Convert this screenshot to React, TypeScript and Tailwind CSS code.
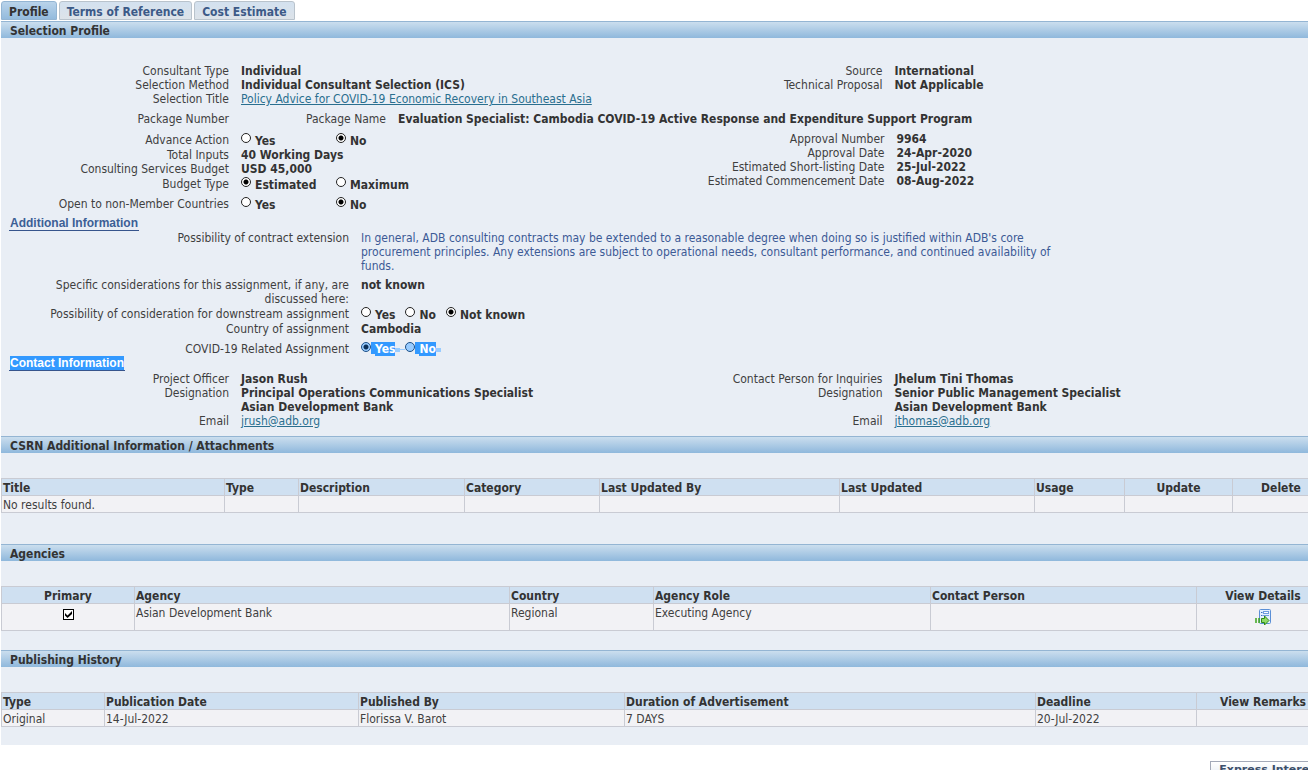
import React from 'react';
import clsx from 'clsx';

const tabs = ['Profile', 'Terms of Reference', 'Cost Estimate'];

const SectionBar = ({ title }: { title: string }) => (
  <h2 className="h-[17px] border-t border-[#94b5d3] bg-gradient-to-b from-[#cbdeee] to-[#8fb8dc] pl-[9px] text-[12px] leading-[18px] font-bold text-[#333333]">
    {title}
  </h2>
);

const SubHeading = ({ title, selected }: { title: string; selected?: boolean }) => (
  <h3 className="ml-2 flex w-fit border-b border-[#36548c] px-px font-['Liberation_Sans',Arial,sans-serif] text-[12px] leading-[14px] font-bold text-[#3c5f95]">
    <span className={clsx(selected && 'bg-[#3399ff] text-white')}>{title}</span>
  </h3>
);

type FieldProps = {
  label: string;
  labelWidth?: string;
  className?: string;
  children?: React.ReactNode;
};

const Field = ({ label, labelWidth = 'w-[228px]', className, children }: FieldProps) => (
  <div className={clsx('flex gap-3', className)}>
    <div className={clsx('shrink-0 text-right', labelWidth)}>{label}</div>
    <div className="min-w-0 font-bold text-[#333333]">{children}</div>
  </div>
);

type RadioProps = {
  name: string;
  label: string;
  checked?: boolean;
  selected?: boolean;
  className?: string;
};

const Radio = ({ name, label, checked, selected, className }: RadioProps) => (
  <label className={clsx('flex', !selected && 'gap-1', className)}>
    <input
      type="radio"
      name={name}
      defaultChecked={checked}
      className={clsx(
        'size-[10px] shrink-0 appearance-none rounded-full border',
        selected
          ? 'border-[#1c4f87] bg-[#99ccff] checked:bg-[radial-gradient(circle,#0b2f57_2px,#99ccff_3px)]'
          : 'border-[#222222] bg-white checked:bg-[radial-gradient(circle,#000000_2px,#ffffff_3px)]'
      )}
    />
    {selected && <span className="h-3 w-1 bg-[#3399ff]" />}
    <span className={clsx(selected ? 'bg-[#3399ff] pt-px leading-[13px] text-white' : 'pt-px')}>{label}</span>
  </label>
);

type Column = { title: string; width?: string; center?: boolean };

type GridProps = {
  label: string;
  columns: Column[];
  rows: React.ReactNode[][];
  tall?: boolean;
};

const DataGrid = ({ label, columns, rows, tall }: GridProps) => (
  <div className="mt-[25px] overflow-hidden">
    <table aria-label={label} className="w-[calc(100%+22px)] table-fixed border-collapse text-[12px] leading-[14px]">
      <thead>
        <tr className="h-[17px] bg-[#cfe0f1]">
          {columns.map((col) => (
            <th
              key={col.title}
              className={clsx(
                'border border-[#c9cbd3] px-px pt-[2px] pb-0 font-bold whitespace-nowrap text-[#333333]',
                col.width,
                col.center ? 'text-center' : 'text-left'
              )}
            >
              {col.title}
            </th>
          ))}
        </tr>
      </thead>
      <tbody>
        {rows.map((row, i) => (
          <tr key={i} className={clsx('bg-[#f2f2f5]', tall ? 'h-[27px]' : 'h-[17px]')}>
            {row.map((cell, j) => (
              <td
                key={j}
                className={clsx(
                  'border border-[#c9cbd3] px-px pt-[2px] pb-0 align-top',
                  columns[j].center && 'text-center'
                )}
              >
                {cell}
              </td>
            ))}
          </tr>
        ))}
      </tbody>
    </table>
  </div>
);

const DetailsIcon = () => (
  <svg width="16" height="16" viewBox="0 0 16 16" aria-hidden="true">
    <rect x="4.5" y="0.5" width="11" height="14" rx="1" fill="#e4f0ff" stroke="#5b8fd6" />
    <path d="M6 3.5h1.5M6 6.5h1.5" stroke="#3c6fc0" />
    <rect x="8.5" y="2.5" width="5" height="2" fill="#ffffff" stroke="#6f9ee0" />
    <path d="M8 6.5h6" stroke="#6f9ee0" />
    <path d="M1 9v5M4 9v5" stroke="#3da51c" strokeWidth="1.5" />
    <path d="M6.5 9.5h3v-2.500l4.500 4.500-4.500 4.500v-2.500h-3z" fill="#8fd968" stroke="#2f8a12" />
  </svg>
);

const PrimaryCheckbox = () => (
  <label className="mt-[3px] grid justify-center">
    <input
      type="checkbox"
      aria-label="Primary"
      defaultChecked
      className="peer col-start-1 row-start-1 size-[11px] appearance-none border border-black bg-white"
    />
    <svg
      width="11"
      height="11"
      viewBox="0 0 11 11"
      aria-hidden="true"
      className="pointer-events-none invisible z-10 col-start-1 row-start-1 peer-checked:visible"
    >
      <path d="M2 4l2.5 2.5 4.5-4.5v3l-4.5 4-2.5-2.5z" fill="#000000" />
    </svg>
  </label>
);

const attachmentColumns: Column[] = [
  { title: 'Title', width: 'w-[223px]' },
  { title: 'Type', width: 'w-[74px]' },
  { title: 'Description', width: 'w-[166px]' },
  { title: 'Category', width: 'w-[135px]' },
  { title: 'Last Updated By', width: 'w-[240px]' },
  { title: 'Last Updated', width: 'w-[195px]' },
  { title: 'Usage', width: 'w-[90px]' },
  { title: 'Update', width: 'w-[108px]', center: true },
  { title: 'Delete', center: true },
];

const agencyColumns: Column[] = [
  { title: 'Primary', width: 'w-[133px]', center: true },
  { title: 'Agency', width: 'w-[375px]' },
  { title: 'Country', width: 'w-[144px]' },
  { title: 'Agency Role', width: 'w-[277px]' },
  { title: 'Contact Person', width: 'w-[266px]' },
  { title: 'View Details', center: true },
];

const historyColumns: Column[] = [
  { title: 'Type', width: 'w-[103px]' },
  { title: 'Publication Date', width: 'w-[254px]' },
  { title: 'Published By', width: 'w-[266px]' },
  { title: 'Duration of Advertisement', width: 'w-[411px]' },
  { title: 'Deadline', width: 'w-[161px]' },
  { title: 'View Remarks', center: true },
];

const linkClass = 'font-normal text-[#2a6f8f] underline';

const App = () => {
  return (
    <div className="h-screen overflow-hidden bg-white pl-px font-['DejaVu_Sans_Condensed','DejaVu_Sans',Tahoma,sans-serif] text-[12px] leading-[14px] text-[#3f3f3f]">
      <nav className="flex gap-[2px] pt-px">
        {tabs.map((tab, i) => (
          <a
            key={tab}
            href="#"
            className={clsx(
              'h-[19px] rounded-t-[3px] border px-[7px] pt-[3px] font-bold whitespace-nowrap',
              i === 0
                ? 'border-[#94b5d3] bg-gradient-to-b from-[#b9d3ea] to-[#94bbdd] text-[#333333]'
                : 'border-[#b9c3cc] bg-gradient-to-b from-[#d3e1ef] to-[#dde3e9] text-[#3c5a87]'
            )}
          >
            {tab}
          </a>
        ))}
      </nav>

      <main className="mt-px bg-[#e9eef5] pb-[18px]">
        <SectionBar title="Selection Profile" />

        <div className="flex pt-[26px]">
          <div className="basis-1/2">
            <Field label="Consultant Type">Individual</Field>
            <Field label="Selection Method">Individual Consultant Selection (ICS)</Field>
            <Field label="Selection Title">
              <a href="#" className={linkClass}>
                Policy Advice for COVID-19 Economic Recovery in Southeast Asia
              </a>
            </Field>
          </div>
          <div className="basis-1/2">
            <Field label="Source">International</Field>
            <Field label="Technical Proposal">Not Applicable</Field>
          </div>
        </div>

        <div className="mt-[6px] flex">
          <div className="w-[228px] shrink-0 text-right">Package Number</div>
          <Field label="Package Name" labelWidth="w-[157px]">
            Evaluation Specialist: Cambodia COVID-19 Active Response and Expenditure Support Program
          </Field>
        </div>

        <div className="mt-[6px] flex">
          <div className="basis-1/2 pt-px">
            <Field label="Advance Action" className="h-[15px]">
              <div className="flex">
                <Radio name="advance" label="Yes" className="w-[95px]" />
                <Radio name="advance" label="No" checked />
              </div>
            </Field>
            <Field label="Total Inputs">40 Working Days</Field>
            <Field label="Consulting Services Budget">USD 45,000</Field>
            <Field label="Budget Type" className="mt-px h-[15px]">
              <div className="flex">
                <Radio name="budget" label="Estimated" checked className="w-[95px]" />
                <Radio name="budget" label="Maximum" />
              </div>
            </Field>
            <Field label="Open to non-Member Countries" className="mt-[5px] h-[15px]">
              <div className="flex">
                <Radio name="nonmember" label="Yes" className="w-[95px]" />
                <Radio name="nonmember" label="No" checked />
              </div>
            </Field>
          </div>
          <div className="basis-1/2">
            <Field label="Approval Number" labelWidth="w-[230px]">9964</Field>
            <Field label="Approval Date" labelWidth="w-[230px]">24-Apr-2020</Field>
            <Field label="Estimated Short-listing Date" labelWidth="w-[230px]">25-Jul-2022</Field>
            <Field label="Estimated Commencement Date" labelWidth="w-[230px]">08-Aug-2022</Field>
          </div>
        </div>

        <div className="mt-1">
          <SubHeading title="Additional Information" />
        </div>
        <Field label="Possibility of contract extension" labelWidth="w-[348px]">
          <p className="max-w-[700px] font-normal text-[#3c5a95]">
            In general, ADB consulting contracts may be extended to a reasonable degree when doing so is justified within
            ADB's core procurement principles. Any extensions are subject to operational needs, consultant performance, and
            continued availability of funds.
          </p>
        </Field>
        <Field
          label="Specific considerations for this assignment, if any, are discussed here:"
          labelWidth="w-[348px] pl-10"
          className="mt-[5px]"
        >
          not known
        </Field>
        <Field
          label="Possibility of consideration for downstream assignment"
          labelWidth="w-[348px]"
          className="mt-px h-[15px]"
        >
          <div className="flex gap-[10px]">
            <Radio name="downstream" label="Yes" />
            <Radio name="downstream" label="No" />
            <Radio name="downstream" label="Not known" checked />
          </div>
        </Field>
        <Field label="Country of assignment" labelWidth="w-[348px]">Cambodia</Field>
        <Field label="COVID-19 Related Assignment" labelWidth="w-[348px]" className="mt-[6px]">
          <div className="flex items-start">
            <Radio name="covid" label="Yes" checked selected />
            <span className="mt-[6px] h-1 w-[5px] bg-[#99ccff]" />
            <span className="mt-[7px] h-px w-[5px] bg-[#99ccff]" />
            <Radio name="covid" label="No" selected />
            <span className="mt-[6px] h-1 w-[5px] bg-[#99ccff]" />
          </div>
        </Field>

        <SubHeading title="Contact Information" selected />
        <div className="flex pt-px">
          <div className="basis-1/2">
            <Field label="Project Officer">Jason Rush</Field>
            <Field label="Designation">
              Principal Operations Communications Specialist
              <br />
              Asian Development Bank
            </Field>
            <Field label="Email">
              <a href="#" className={linkClass}>jrush@adb.org</a>
            </Field>
          </div>
          <div className="basis-1/2">
            <Field label="Contact Person for Inquiries">Jhelum Tini Thomas</Field>
            <Field label="Designation">
              Senior Public Management Specialist
              <br />
              Asian Development Bank
            </Field>
            <Field label="Email">
              <a href="#" className={linkClass}>jthomas@adb.org</a>
            </Field>
          </div>
        </div>

        <section className="mt-2">
          <SectionBar title="CSRN Additional Information / Attachments" />
          <DataGrid
            label="Attachments"
            columns={attachmentColumns}
            rows={[['No results found.', '', '', '', '', '', '', '', '']]}
          />
        </section>

        <section className="mt-[31px]">
          <SectionBar title="Agencies" />
          <DataGrid
            label="Agencies"
            columns={agencyColumns}
            tall
            rows={[
              [
                <PrimaryCheckbox />,
                'Asian Development Bank',
                'Regional',
                'Executing Agency',
                '',
                <button type="button" aria-label="View Details" className="mt-[3px] block w-full">
                  <span className="flex justify-center">
                    <DetailsIcon />
                  </span>
                </button>,
              ],
            ]}
          />
        </section>

        <section className="mt-[19px]">
          <SectionBar title="Publishing History" />
          <DataGrid
            label="Publishing History"
            columns={historyColumns}
            rows={[['Original', '14-Jul-2022', 'Florissa V. Barot', '7 DAYS', '20-Jul-2022', '']]}
          />
        </section>
      </main>

      <div className="-mr-[22px] flex justify-end pt-4">
        <button
          type="button"
          className="border border-[#a3a9b8] bg-gradient-to-b from-white to-[#dfe6ef] px-2 pt-px pb-1 font-['DejaVu_Sans',Verdana,sans-serif] text-[11px] leading-[14px] font-bold whitespace-nowrap text-[#3c4f6b]"
        >
          Express Interest
        </button>
      </div>
    </div>
  );
};

export default App;
